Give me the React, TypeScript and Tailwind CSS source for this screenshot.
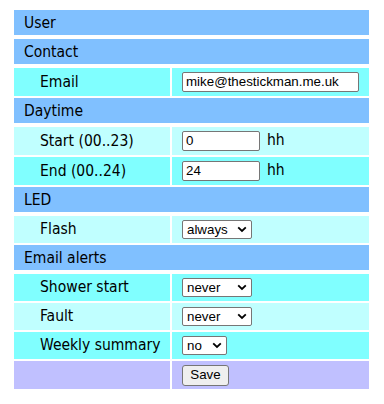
import React from "react";

const labelFont = { fontFamily: '"DejaVu Sans Condensed", "Liberation Sans", sans-serif' };

function Header({ text }: { text: string }) {
  return (
    <div className="col-span-2 h-[25px] mb-[2px] bg-[#80c0ff] flex items-center pl-[10px] pt-[2px] text-[15.5px] text-black" style={labelFont}>
      {text}
    </div>
  );
}

function Row({ label, bg, h, children }: { label: string; bg: string; h: string; children?: React.ReactNode }) {
  return (
    <>
      <div className={`${bg} ${h} flex items-center pl-[26px] pt-[1px] text-[15.5px] text-black`} style={labelFont}>
        {label}
      </div>
      <div className={`${bg} ${h} flex items-center pl-[10px]`}>{children}</div>
    </>
  );
}

function TextBox({ value, w }: { value: string; w: string }) {
  return (
    <div className={`${w} h-[20px] bg-white border border-[#767676] rounded-[2px] flex items-center pl-[3px] text-[13.33px] text-black font-['Liberation_Sans',sans-serif]`}>
      {value}
    </div>
  );
}

function Select({ value, w }: { value: string; w: string }) {
  return (
    <div className={`${w} h-[19px] bg-white border border-[#767676] rounded-[2px] flex items-center justify-between pl-[4px] pr-[4px] text-[13.33px] text-black font-['Liberation_Sans',sans-serif]`}>
      <span>{value}</span>
      <svg width="10" height="7" viewBox="0 0 10 7">
        <path d="M1.2 1.3 L5 5 L8.8 1.3" fill="none" stroke="#000" strokeWidth="1.8" />
      </svg>
    </div>
  );
}

export default function App() {
  return (
    <div className="w-[384px] h-[404px] bg-white pt-[10px] pl-[14px]">
      <div className="grid grid-cols-[156px_197px] gap-x-[2px] gap-y-[2px] w-[355px]">
        <Header text="User" />
        <Header text="Contact" />
        <Row label="Email" bg="bg-[#80ffff]" h="h-[28px]">
          <TextBox value="mike@thestickman.me.uk" w="w-[177px]" />
        </Row>
        <Header text="Daytime" />
        <Row label="Start (00..23)" bg="bg-[#c0ffff]" h="h-[28px]">
          <TextBox value="0" w="w-[78px]" />
          <span className="ml-[7px] text-[15.5px] text-black" style={labelFont}>hh</span>
        </Row>
        <Row label="End (00..24)" bg="bg-[#80ffff]" h="h-[28px]">
          <TextBox value="24" w="w-[78px]" />
          <span className="ml-[7px] text-[15.5px] text-black" style={labelFont}>hh</span>
        </Row>
        <Header text="LED" />
        <Row label="Flash" bg="bg-[#c0ffff]" h="h-[27px]">
          <Select value="always" w="w-[70px]" />
        </Row>
        <Header text="Email alerts" />
        <Row label="Shower start" bg="bg-[#80ffff]" h="h-[27px]">
          <Select value="never" w="w-[70px]" />
        </Row>
        <Row label="Fault" bg="bg-[#c0ffff]" h="h-[27px]">
          <Select value="never" w="w-[70px]" />
        </Row>
        <Row label="Weekly summary" bg="bg-[#80ffff]" h="h-[27px]">
          <Select value="no" w="w-[45px]" />
        </Row>
        <Row label="" bg="bg-[#c0c0ff]" h="h-[28px]">
          <div className="w-[47px] h-[21px] bg-[#efefef] border border-[#767676] rounded-[3px] flex items-center justify-center text-[13.33px] text-black font-['Liberation_Sans',sans-serif]">
            Save
          </div>
        </Row>
      </div>
    </div>
  );
}
